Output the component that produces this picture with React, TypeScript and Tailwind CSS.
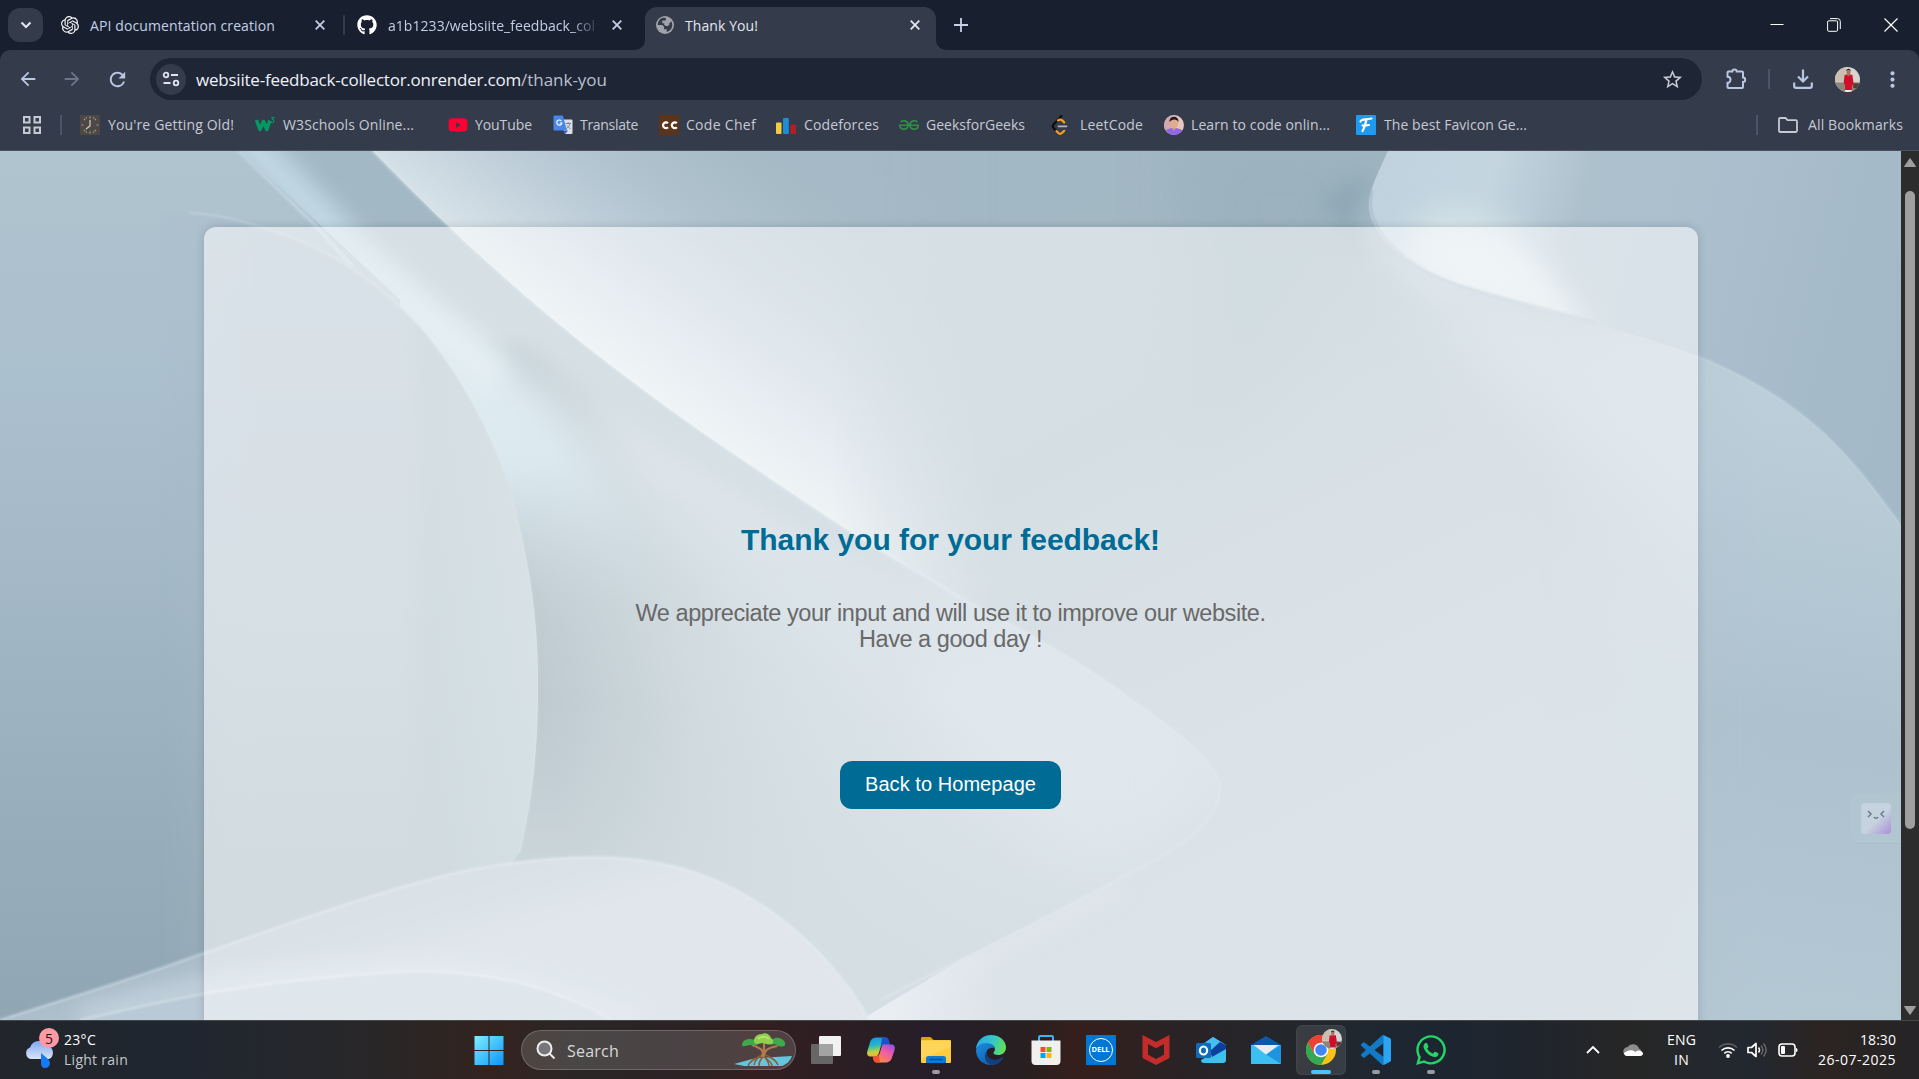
import React, { useLayoutEffect, useRef, useState } from "react";
import { FaGithub, FaYoutube, FaWhatsapp } from "react-icons/fa";
import { SiOpenai, SiGeeksforgeeks } from "react-icons/si";
import {
  MdArrowBack,
  MdArrowForward,
  MdRefresh,
  MdStarOutline,
  MdMoreVert,
} from "react-icons/md";

/* Text whose tracking is adjusted so that the line takes exactly `w` pixels. */
function Fit({ w, className = "", children }: { w: number; className?: string; children: React.ReactNode }) {
  const ref = useRef<HTMLSpanElement>(null);
  const [ls, setLs] = useState(0);
  useLayoutEffect(() => {
    const el = ref.current;
    if (!el) return;
    const n = (el.textContent || "").length;
    setLs((w - el.getBoundingClientRect().width) / n);
  }, [w]);
  return (
    <span ref={ref} className={"inline-block whitespace-pre " + className} style={{ letterSpacing: ls + "px" }}>
      {children}
    </span>
  );
}

const Cross = ({ className = "" }: { className?: string }) => (
  <svg viewBox="0 0 10 10" className={"h-2.5 w-2.5 shrink-0 " + className}>
    <path d="M0.7 0.7 9.3 9.3M9.3 0.7 0.7 9.3" stroke="currentColor" strokeWidth="1.8" />
  </svg>
);

const Globe = () => (
  <svg viewBox="0 0 18 18" className="h-[18px] w-[18px] shrink-0">
    <circle cx="9" cy="9" r="9" fill="#a0a4aa" />
    <path
      d="M7.5 1.8C4 2.4 1.7 5.3 1.8 9h3.6c1.500 0 2.600 1 2.600 2.400v1.800h2.700v2.900c3.300-.8 5.600-3.700 5.600-7 0-1.500-.4-2.900-1.200-4.100-.3 1.400-1.200 2.200-2.600 2.200h-1.800v1.800H8.900V7.200H6.300V4.500h3.500V2.100c-.8-.3-1.500-.4-2.300-.3z"
      fill="#343b4b"
    />
    <path d="M9 5.500h3.200l1.500 2.700-2 1.900H9.400L8 8.200z" fill="#a0a4aa" />
  </svg>
);

const Portrait = ({ className = "" }: { className?: string }) => (
  <svg viewBox="0 0 26 26" className={"shrink-0 rounded-full " + className}>
    <rect width="26" height="26" fill="#d7d4d2" />
    <rect width="11" height="15" fill="#c9bfae" />
    <rect y="16" width="26" height="10" fill="#8f8478" />
    <rect x="19" y="17" width="7" height="5" fill="#5a3a34" />
    <path d="M10 8h8l1.500 10-2 1.500V25h-7v-6l-1.500-3z" fill="#cf0f2c" />
    <path d="M12 4h4v4l-2 1.500L12 8z" fill="#a8745a" />
    <path d="M11.500 4.500C11.500 1 16.500 1 16.500 4.500L15 3.500h-2z" fill="#241b1b" />
    <path d="M10.500 24h7v2h-7z" fill="#eee" />
  </svg>
);

/* ---------- bookmark icons ---------- */

const IcoClock = () => (
  <svg viewBox="0 0 20 20" className="h-5 w-5">
    <rect width="20" height="20" fill="#4b4845" />
    <g stroke="#a59c8b" strokeWidth="1.200">
      <path d="M10 1.500v2M10 16.500v2M1.500 10h2M16.500 10h2M4 4l1.200 1.200M16 4l-1.200 1.200M4 16l1.200-1.200M16 16l-1.200-1.200M6 2.200l.6 1.400M14 2.200l-.6 1.400M6 17.800l.6-1.400M14 17.800l-.6-1.400" />
      <path d="M10 5v6l-4 3" stroke="#d8cfbd" fill="none" />
    </g>
  </svg>
);
const IcoW3 = () => (
  <svg viewBox="0 0 20 20" className="h-5 w-5">
    <path d="M1.500 5l3.500 9.500L8.500 6.500l3.300 8 3-9" fill="none" stroke="#059862" strokeWidth="3.600" strokeLinejoin="round" />
    <path d="M16 2.500h3l-1.500 2c2 0 2 3.200-.2 3.200-.7 0-1.200-.3-1.500-.8" fill="none" stroke="#059862" strokeWidth="1.100" />
  </svg>
);
const IcoTranslate = () => (
  <svg viewBox="0 0 20 20" className="h-5 w-5">
    <path d="M7 4.500h11.500a1 1 0 011 1V18a1 1 0 01-1 1H12z" fill="#dcdfe3" />
    <path d="M10.500 15.500l1.500 3.700 3-3.700z" fill="#2f5fc4" />
    <path d="M1.500.5h8.300L14 15.500H1.500a1 1 0 01-1-1v-13a1 1 0 011-1z" fill="#4a86ea" />
    <path d="M8.400 6A2.600 2.600 0 108.900 8H6.700" fill="none" stroke="#fff" strokeWidth="1.200" />
    <path d="M12.500 8.500h5.500M15.200 7v1.500M17 8.500c-.5 2.500-2 4-3.500 5M14 10.500l3.500 3.500" stroke="#7b8794" fill="none" />
  </svg>
);
const IcoCC = () => (
  <svg viewBox="0 0 20 20" className="h-5 w-5">
    <rect width="20" height="20" fill="#5b3419" />
    <path d="M9 8.200A2.900 2.900 0 109 12.300M17.800 8.200a2.900 2.900 0 100 4.100" fill="none" stroke="#fff" strokeWidth="2.300" />
  </svg>
);
const IcoCF = () => (
  <svg viewBox="0 0 20 20" className="h-5 w-5">
    <rect x="0" y="7.500" width="5.500" height="11.500" rx="1" fill="#f6c944" />
    <rect x="7" y="3" width="5.800" height="16" rx="1" fill="#1f8dd6" />
    <rect x="14.500" y="9.500" width="5.500" height="9.500" rx="1" fill="#b21f26" />
  </svg>
);
const IcoLeet = () => (
  <svg viewBox="0 0 20 20" className="h-5 w-5" fill="none" strokeWidth="2.200" strokeLinecap="round">
    <path d="M11.500 1 3.500 9.500c-1 1.200-1 2.300 0 3.400l3 3.200" stroke="#0d0d0d" />
    <path d="M6.500 16.100l1.500 1.700c1.300 1.200 3 1.200 4.200 0l2-2M8 5.400c1.500-1 3-1 4.200 0l2 2" stroke="#f5a11b" />
    <path d="M8.500 11.300h8" stroke="#b3b3b3" strokeWidth="1.800" />
  </svg>
);
const IcoFace = () => (
  <svg viewBox="0 0 20 20" className="h-5 w-5 rounded-full">
    <rect width="20" height="20" fill="#e6c4c0" />
    <rect width="8" height="20" fill="#cfa9ae" />
    <path d="M0 20c0-5 4-7 10-7s10 2 10 7z" fill="#8f68e8" />
    <ellipse cx="10" cy="8" rx="4.200" ry="5.600" fill="#e2ac8c" />
    <path d="M5.500 7C5 0 15 0 14.500 7 13 3.500 8 3.500 5.500 7z" fill="#201a26" />
    <path d="M8 13h4l-2 3z" fill="#d49a7c" />
  </svg>
);
const IcoFav = () => (
  <svg viewBox="0 0 20 20" className="h-5 w-5">
    <rect width="20" height="20" rx="1" fill="#1e9bf0" />
    <path d="M4.500 6.500c1-3 4-1.500 11-3M10.500 5c-1.500 4-1.500 7-4 11M6.500 10.500c2 .8 4-.5 6.500-.5" fill="none" stroke="#fff" strokeWidth="2.200" strokeLinecap="round" />
  </svg>
);

const bookmarks = [
  { icon: <IcoClock />, label: "You're Getting Old!", w: 126, cls: "w-[175px] gap-[8px]" },
  { icon: <IcoW3 />, label: "W3Schools Online...", w: 131, cls: "w-[193px] gap-[8px]" },
  { icon: <FaYoutube className="h-5 w-5 text-[#ff0033]" />, label: "YouTube", w: 57, cls: "w-[105px] gap-[7px]" },
  { icon: <IcoTranslate />, label: "Translate", w: 58, cls: "w-[106px] gap-[7px]" },
  { icon: <IcoCC />, label: "Code Chef", w: 70, cls: "w-[117px] gap-[7px]" },
  { icon: <IcoCF />, label: "Codeforces", w: 75, cls: "w-[123px] gap-[8px]" },
  { icon: <SiGeeksforgeeks className="h-5 w-5 text-[#2f8d46]" />, label: "GeeksforGeeks", w: 99, cls: "w-[151px] gap-[7px]" },
  { icon: <IcoLeet />, label: "LeetCode", w: 63, cls: "w-[114px] gap-[10px]" },
  { icon: <IcoFace />, label: "Learn to code onlin...", w: 139, cls: "w-[192px] gap-[7px]" },
  { icon: <IcoFav />, label: "The best Favicon Ge...", w: 143, cls: "w-[175px] gap-[8px]" },
];

/* ---------- browser chrome ---------- */

function TabStrip() {
  return (
    <div className="flex h-[50px] items-center bg-[#18202f] pl-2 text-[14px] text-[#c3cfe6]">
      <div className="flex h-[34px] w-[35px] items-center justify-center rounded-xl bg-[#343b4b]">
        <svg viewBox="0 0 12 8" className="h-2 w-3">
          <path d="M1.500 1.500 6 6l4.500-4.500" fill="none" stroke="#dfe4ee" strokeWidth="2.200" />
        </svg>
      </div>
      <SiOpenai className="ml-[18px] h-[18px] w-[18px] text-[#f2f4f8]" />
      <Fit w={185} className="ml-[11px] pt-px">API documentation creation</Fit>
      <Cross className="ml-10" />
      <div className="ml-[18px] h-5 w-[2px] rounded bg-[#343b4b]" />
      <FaGithub className="ml-[12px] h-5 w-5 text-white" />
      <div className="ml-[11px] w-[208px] pt-px [mask-image:linear-gradient(to_right,black_88%,rgba(0,0,0,0.15))]">
        <Fit w={207}>a1b1233/websiite_feedback_col</Fit>
      </div>
      <Cross className="ml-4" />
      <div className="ml-[13px] h-full w-[10px] self-end bg-[#343b4b]">
        <div className="h-full rounded-br-[12px] bg-[#18202f]" />
      </div>
      <div className="flex h-[43px] w-[291px] items-center self-end rounded-t-[12px] bg-[#343b4b] pb-[7px] pl-[11px] text-[#e3e7f0]">
        <Globe />
        <Fit w={73} className="ml-[11px] pt-px">Thank You!</Fit>
        <Cross className="ml-[152px]" />
      </div>
      <div className="h-full w-[10px] bg-[#343b4b]">
        <div className="h-full rounded-bl-[12px] bg-[#18202f]" />
      </div>
      <svg viewBox="0 0 14 14" className="ml-[8px] h-[14px] w-[14px]">
        <path d="M7 0v14M0 7h14" stroke="#c8d2e6" strokeWidth="1.800" />
      </svg>
      <div className="ml-auto flex items-center text-white">
        <svg viewBox="0 0 14 14" className="h-[14px] w-[14px]">
          <path d="M0.500 6.500h13" stroke="#fff" />
        </svg>
        <svg viewBox="0 0 14 14" className="ml-[43px] h-[14px] w-[14px]" fill="none" stroke="#fff">
          <rect x="0.600" y="2.800" width="10" height="10.500" rx="1.200" />
          <path d="M3 .6h7.500a2.800 2.800 0 012.800 2.800V11" />
        </svg>
        <svg viewBox="0 0 14 14" className="mr-[21px] ml-[43px] h-[14px] w-[14px]">
          <path d="M0.500 0.500l13 13M13.500 0.500l-13 13" stroke="#fff" strokeWidth="1.200" />
        </svg>
      </div>
    </div>
  );
}

function Toolbar() {
  return (
    <div className="flex h-[58px] items-center bg-[#343b4b] pl-[17px] text-[#b9c7e2]">
      <MdArrowBack className="h-[22px] w-[22px]" />
      <MdArrowForward className="ml-[22px] h-[22px] w-[22px] text-[#6d7688]" />
      <MdRefresh className="ml-[23px] h-[23px] w-[23px]" />
      <div className="ml-[21px] flex h-[42px] w-[1552px] items-center rounded-full bg-[#1e2636] pl-[6px]">
        <div className="flex h-[31px] w-[30px] items-center justify-center rounded-full bg-[#343b4b]">
          <svg viewBox="0 0 18 16" className="h-4 w-[18px]" fill="none" stroke="#dfe5f0" strokeWidth="1.800">
            <circle cx="4" cy="4" r="2.300" />
            <path d="M9 4h7M1.500 12h7" />
            <circle cx="14" cy="12" r="2.300" />
          </svg>
        </div>
        <div className="ml-[10px] flex pt-px text-[17px] text-[#eef1f7]">
          <Fit w={325}>websiite-feedback-collector.onrender.com</Fit>
          <Fit w={86} className="text-[#b9c0cf]">/thank-you</Fit>
        </div>
        <MdStarOutline className="mr-[18px] ml-auto h-[23px] w-[23px] text-[#c6cad3]" />
      </div>
      <svg viewBox="0 0 24 24" className="ml-[22px] h-6 w-6" fill="none" stroke="currentColor" strokeWidth="2">
        <path d="M4 4.500h4.300a2.200 2 0 014.400 0h5.300a1 1 0 011 1v5a2.200 2.200 0 010 4.400V20a1 1 0 01-1 1H4.500a1 1 0 01-1-1v-4.200a3 3 0 000-6V5.500a1 1 0 011-1z" />
      </svg>
      <div className="ml-[20px] h-5 w-[2px] bg-[#4b556a]" />
      <svg viewBox="0 0 20 20" className="ml-[23px] h-5 w-5" fill="none" stroke="currentColor" strokeWidth="2.200">
        <path d="M10 .5v11.500M5 7.500l5 5 5-5M1.200 13.500V17a1.800 1.800 0 001.800 1.800h14a1.800 1.800 0 001.800-1.800v-3.500" />
      </svg>
      <Portrait className="ml-[22px] h-[25px] w-[25px]" />
      <MdMoreVert className="ml-[20px] h-[25px] w-[25px]" />
    </div>
  );
}

function BookmarkBar() {
  return (
    <div className="flex h-[43px] items-center border-b border-[#4b525f] bg-[#343b4b] pb-[9px] pl-[23px] text-[14px] text-[#c6cad3]">
      <svg viewBox="0 0 18 18" className="h-[18px] w-[18px]" fill="none" stroke="currentColor" strokeWidth="2">
        <path d="M1 1h5.500v5.500H1zM11.500 1H17v5.500h-5.500zM1 11.500h5.500V17H1zM11.500 11.500H17V17h-5.500z" />
      </svg>
      <div className="mr-[18px] ml-[19px] h-5 w-[2px] bg-[#4b556a]" />
      {bookmarks.map((b) => (
        <div key={b.label} className={"flex shrink-0 items-center " + b.cls}>
          {b.icon}
          <Fit w={b.w}>{b.label}</Fit>
        </div>
      ))}
      <div className="mr-[16px] ml-auto flex items-center">
        <div className="h-5 w-[2px] bg-[#4b556a]" />
        <svg viewBox="0 0 20 16" className="ml-[20px] h-4 w-5" fill="none" stroke="currentColor" strokeWidth="1.800">
          <path d="M1 2.200C1 1.500 1.500 1 2.200 1h5.300l2 2.200h8.300c.7 0 1.200.5 1.200 1.200v9.400c0 .7-.5 1.200-1.200 1.200H2.200C1.500 15 1 14.500 1 13.800z" />
        </svg>
        <Fit w={95} className="ml-[10px]">All Bookmarks</Fit>
      </div>
    </div>
  );
}

/* ---------- page ---------- */

function Waves() {
  return (
    <svg
      viewBox="0 151 1901 869"
      preserveAspectRatio="none"
      colorInterpolationFilters="sRGB"
      className="absolute inset-0 h-full w-full"
    >
      <defs>
        <linearGradient id="left" x1="0" y1="151" x2="0" y2="1020" gradientUnits="userSpaceOnUse">
          <stop offset="0" stopColor="#afc4ce" />
          <stop offset=".25" stopColor="#abc0cd" />
          <stop offset=".4" stopColor="#a7bbcb" />
          <stop offset=".7" stopColor="#9ab0bf" />
          <stop offset="1" stopColor="#90a6b3" />
        </linearGradient>
        <linearGradient id="arc" x1="0" y1="210" x2="0" y2="870" gradientUnits="userSpaceOnUse">
          <stop offset="0" stopColor="#acbecd" />
          <stop offset=".4" stopColor="#a8bac8" />
          <stop offset=".6" stopColor="#a5bac4" />
          <stop offset="1" stopColor="#9cb1bb" />
        </linearGradient>
        <linearGradient id="arcFade" x1="0" y1="0" x2="420" y2="0" gradientUnits="userSpaceOnUse">
          <stop offset=".38" stopColor="#fff" stopOpacity="0" />
          <stop offset=".6" stopColor="#fff" stopOpacity="1" />
        </linearGradient>
        <mask id="arcMask"><rect y="151" width="1901" height="869" fill="url(#arcFade)" /></mask>
        <linearGradient id="arcTone" x1="400" y1="0" x2="540" y2="0" gradientUnits="userSpaceOnUse">
          <stop offset="0" stopColor="#97b0b8" stopOpacity="0" />
          <stop offset=".22" stopColor="#97b0b8" stopOpacity=".55" />
          <stop offset="1" stopColor="#a5bfca" stopOpacity=".6" />
        </linearGradient>
        <linearGradient id="sheet" x1="353" y1="176" x2="556" y2="-93" gradientUnits="userSpaceOnUse">
          <stop offset="0" stopColor="#dde8ec" />
          <stop offset=".1" stopColor="#d3dfe6" />
          <stop offset=".3" stopColor="#c0cfda" />
          <stop offset=".5" stopColor="#b0c3cf" />
          <stop offset=".75" stopColor="#a6bbc6" />
          <stop offset="1" stopColor="#a4b9c5" />
        </linearGradient>
        <linearGradient id="sheetFade" x1="830" y1="0" x2="1000" y2="0" gradientUnits="userSpaceOnUse">
          <stop offset="0" stopColor="#fff" />
          <stop offset="1" stopColor="#fff" stopOpacity="0" />
        </linearGradient>
        <mask id="sheetMask"><rect y="151" width="1901" height="869" fill="url(#sheetFade)" /></mask>
        <linearGradient id="sheetBase" x1="900" y1="200" x2="1250" y2="900" gradientUnits="userSpaceOnUse">
          <stop offset="0" stopColor="#a2b8c4" />
          <stop offset=".4" stopColor="#a2b8c1" />
          <stop offset=".7" stopColor="#acbdc9" />
          <stop offset="1" stopColor="#b2c2cf" />
        </linearGradient>
        <linearGradient id="under" x1="530" y1="680" x2="1010" y2="560" gradientUnits="userSpaceOnUse">
          <stop offset="0" stopColor="#6d8795" />
          <stop offset=".12" stopColor="#7e97a4" />
          <stop offset=".32" stopColor="#98afba" />
          <stop offset=".55" stopColor="#a8bdc8" />
          <stop offset=".8" stopColor="#b7c8d4" />
          <stop offset="1" stopColor="#bccbd7" />
        </linearGradient>
        <linearGradient id="underLow" x1="0" y1="700" x2="0" y2="950" gradientUnits="userSpaceOnUse">
          <stop offset="0" stopColor="#9bb2bd" stopOpacity="0" />
          <stop offset="1" stopColor="#a1b7c0" stopOpacity=".9" />
        </linearGradient>
        <linearGradient id="glow" x1="0" y1="360" x2="0" y2="620" gradientUnits="userSpaceOnUse">
          <stop offset="0" stopColor="#b9d4e1" />
          <stop offset=".4" stopColor="#b2cfdd" />
          <stop offset="1" stopColor="#8faab9" stopOpacity="0" />
        </linearGradient>
        <linearGradient id="wave" x1="200" y1="850" x2="250" y2="1020" gradientUnits="userSpaceOnUse">
          <stop offset="0" stopColor="#b0c1cd" />
          <stop offset=".6" stopColor="#acbdca" />
          <stop offset="1" stopColor="#b9c8d5" />
        </linearGradient>
        <linearGradient id="rightTop" x1="1370" y1="200" x2="1901" y2="330" gradientUnits="userSpaceOnUse">
          <stop offset="0" stopColor="#bfd2de" />
          <stop offset=".2" stopColor="#c5d6e0" />
          <stop offset=".38" stopColor="#adc1cd" />
          <stop offset=".7" stopColor="#a9bdcc" />
          <stop offset="1" stopColor="#a3b9c7" />
        </linearGradient>
        <linearGradient id="rightLow" x1="1800" y1="350" x2="1700" y2="1020" gradientUnits="userSpaceOnUse">
          <stop offset="0" stopColor="#bdd0db" />
          <stop offset=".3" stopColor="#b5c9d5" />
          <stop offset=".55" stopColor="#adc2ce" />
          <stop offset="1" stopColor="#b3c8d3" />
        </linearGradient>
        <linearGradient id="rightFade" x1="1540" y1="0" x2="1760" y2="0" gradientUnits="userSpaceOnUse">
          <stop offset="0" stopColor="#fff" stopOpacity="0" />
          <stop offset="1" stopColor="#fff" />
        </linearGradient>
        <mask id="rightMask"><rect y="151" width="1901" height="869" fill="url(#rightFade)" /></mask>
        <filter id="b2" x="-20%" y="-20%" width="140%" height="140%"><feGaussianBlur stdDeviation="1" /></filter>
        <filter id="b12" x="-40%" y="-60%" width="180%" height="220%"><feGaussianBlur stdDeviation="11" /></filter>
        <filter id="b20" x="-50%" y="-60%" width="200%" height="220%"><feGaussianBlur stdDeviation="18" /></filter>
        <filter id="b35" x="-50%" y="-50%" width="200%" height="200%"><feGaussianBlur stdDeviation="32" /></filter>
        <clipPath id="cSheet">
          <path d="M372 151C480 262 580 350 735 455S880 550 960 597C1010 623 1080 660 1131 699L1220 785L1143 866L960 960L860 1020H1901V151Z" />
        </clipPath>
        <clipPath id="cUnder">
          <path d="M240 151H372C480 262 580 350 735 455S880 550 960 597C1010 623 1080 660 1131 699C1180 733 1220 765 1220 787C1220 822 1180 847 1143 866C1080 900 1010 935 960 960L860 1020H400V300Z" />
        </clipPath>
        <clipPath id="cBlob">
          <path d="M1388 151C1370 190 1362 205 1376 228C1400 270 1461 286 1529 306C1620 330 1670 345 1698 356C1810 402 1850 455 1901 525V151Z" />
        </clipPath>
        <clipPath id="cWave">
          <path d="M0 1020C80 994 130 980 204 953C306 918 400 884 470 870C620 842 690 865 740 892C800 925 845 975 869 1020Z" />
        </clipPath>
      </defs>

      <rect y="151" width="1901" height="869" fill="url(#left)" />

      {/* large sheet right of the diagonal */}
      <g clipPath="url(#cSheet)">
        <rect y="151" width="1901" height="869" fill="url(#sheetBase)" />
        <rect y="151" width="1901" height="869" fill="url(#sheet)" mask="url(#sheetMask)" />
        <path d="M1180 120H1390L1370 240L1200 480Z" fill="#93abb8" opacity=".4" filter="url(#b35)" />
        <path d="M1320 200L1368 175V245Z" fill="#7f9caa" opacity=".55" filter="url(#b12)" />
        <path d="M1376 228C1400 270 1461 286 1529 306L1698 356L1760 420L1720 560L1500 400Z" fill="#b7c9d5" filter="url(#b35)" />
        <path d="M1376 228L1529 306L1698 356L1700 420L1500 350Z" fill="#b9cad6" opacity=".6" filter="url(#b20)" />
        <path d="M1376 228C1400 270 1461 286 1529 306C1620 330 1670 345 1698 356C1810 402 1850 455 1901 525V1020H1400V300Z" fill="url(#rightLow)" mask="url(#rightMask)" />
        <path d="M1120 885L960 970L860 1010" fill="none" stroke="#c3d1dc" strokeWidth="16" opacity=".6" filter="url(#b12)" />
      </g>

      {/* folded surface under the diagonal */}
      <g clipPath="url(#cUnder)">
        <rect y="151" width="1901" height="869" fill="url(#under)" />
        <path d="M240 130H400L560 330L440 360L380 290Z" fill="#a4b9c6" filter="url(#b12)" />
        <path d="M560 360L960 600L1060 690L820 650L600 470Z" fill="#b1c4d0" opacity=".9" filter="url(#b35)" />
        <rect y="600" width="1901" height="420" fill="url(#underLow)" />
        <path d="M930 620L1131 690L1220 785L1143 866L1060 870L940 720Z" fill="#bdcfdb" opacity=".6" filter="url(#b35)" />
        <path d="M360 250L540 390L720 630L560 650L460 470Z" fill="url(#glow)" filter="url(#b20)" />
        <path d="M600 400L960 610L1010 650L820 570L650 480Z" fill="#b4c5d1" opacity=".8" filter="url(#b12)" />
        <path d="M270 120L350 210L440 285L620 415L820 540L960 600L735 455L372 120Z" fill="#a2b8c4" filter="url(#b12)" />
        <path d="M225 120L340 240L420 315L500 380" fill="none" stroke="#c3dae5" strokeWidth="38" filter="url(#b12)" />
      </g>

      {/* left arc */}
      <path d="M171 212C200 213 235 218 263 228C320 243 370 275 416 322C455 365 490 430 508 483C530 560 538 620 538 683C538 760 530 810 520 852L500 880L100 1020V212Z" fill="url(#arc)" mask="url(#arcMask)" />
      <path d="M390 296C455 365 490 430 508 483C530 560 538 620 538 683C538 760 530 810 520 852L500 880H390Z" fill="url(#arcTone)" />
      <path d="M190 213C215 214 240 220 263 228C320 243 370 275 416 322" fill="none" stroke="#c7d9e2" strokeWidth="2" opacity=".6" filter="url(#b2)" />
      <path d="M416 322C455 365 490 430 508 483C530 560 538 620 538 683C538 760 530 810 520 852" fill="none" stroke="#c0d3dd" strokeWidth="1.500" opacity=".3" filter="url(#b2)" />
      <path d="M239 151L312 222L352 266" fill="none" stroke="#c8dce7" strokeWidth="4" opacity=".6" filter="url(#b2)" />

      {/* diagonal edge highlights */}
      <path d="M372 151C480 262 580 350 735 455S880 550 960 597" fill="none" stroke="#dde8ed" strokeWidth="2" opacity=".5" filter="url(#b2)" />
      <path d="M960 597C1010 623 1080 660 1131 699C1180 733 1220 765 1220 787C1220 822 1180 847 1143 866C1080 900 1010 935 960 960L880 1000" fill="none" stroke="#c6d5df" strokeWidth="2" opacity=".45" filter="url(#b2)" />

      {/* upper right fold */}
      <g clipPath="url(#cBlob)">
        <rect y="151" width="1901" height="869" fill="url(#rightTop)" />
        <path d="M1390 260L1440 210L1510 230L1600 345L1461 300Z" fill="#dbe7eb" filter="url(#b20)" />
        <path d="M1420 262L1470 240L1530 265L1590 335L1461 292Z" fill="#dbe7eb" opacity=".6" filter="url(#b12)" />
      </g>
      <path d="M1372 190C1362 225 1400 266 1461 286C1520 304 1560 312 1596 323" fill="none" stroke="#a4b8c2" strokeWidth="3" opacity=".8" filter="url(#b2)" />
      <path d="M1364 200C1362 232 1396 274 1458 295" fill="none" stroke="#cfdee7" strokeWidth="10" opacity=".5" filter="url(#b12)" />
      <path d="M1698 356C1810 402 1850 455 1901 525" fill="none" stroke="#c6d8e2" strokeWidth="1.500" opacity=".6" filter="url(#b2)" />

      {/* lower wave */}
      <g clipPath="url(#cWave)">
        <rect y="840" width="900" height="180" fill="url(#wave)" />
        <path d="M80 1020C150 1000 240 975 416 971C500 972 560 990 640 1020" fill="none" stroke="#c6d5df" strokeWidth="20" filter="url(#b12)" />
        <path d="M80 1020C150 1005 240 980 416 971C500 972 560 990 612 1020Z" fill="#b9c9d5" />
        <path d="M80 1020C150 1005 240 980 416 971C500 972 560 990 612 1020" fill="none" stroke="#d5e1e9" strokeWidth="2.500" opacity=".7" filter="url(#b2)" />
      </g>
      <path d="M0 1020C80 994 130 980 204 953C306 918 400 884 470 870C620 842 690 865 740 892C800 925 845 975 869 1020" fill="none" stroke="#c6d7e1" strokeWidth="2.500" opacity=".7" filter="url(#b2)" />
    </svg>
  );
}

function ScrollBar() {
  return (
    <div className="flex h-full w-[18px] shrink-0 flex-col items-center bg-[#2c2c2c]">
      <svg viewBox="0 0 12 9" className="mt-[7px] h-[9px] w-3">
        <path d="M6 .5 11.500 8.500H.5z" fill="#9f9f9f" stroke="#9f9f9f" strokeLinejoin="round" />
      </svg>
      <div className="mt-[24px] h-[638px] w-[10px] rounded-full bg-[#9f9f9f]" />
      <svg viewBox="0 0 12 9" className="mt-auto mb-[5px] h-[9px] w-3">
        <path d="M6 8.500 11.500.5H.5z" fill="#9f9f9f" stroke="#9f9f9f" strokeLinejoin="round" />
      </svg>
    </div>
  );
}

function Page() {
  return (
    <div className="flex h-[869px]">
      <div className="relative h-full flex-1 overflow-hidden">
        <Waves />
        <div className="relative mx-auto mt-[76px] flex h-[900px] w-[1494px] flex-col items-center rounded-xl bg-white/55 pt-[293px] font-['Liberation_Sans',Arial,sans-serif] shadow-[0_0_10px_rgba(0,0,0,0.15)]">
          <h1 className="text-[30px] leading-[40px] font-bold text-[#006b94]">
            <Fit w={419}>Thank you for your feedback!</Fit>
          </h1>
          <p className="mt-[40px] flex flex-col items-center text-[23.5px] leading-[26px] text-[#696969]">
            <Fit w={630}>We appreciate your input and will use it to improve our website.</Fit>
            <Fit w={183}>Have a good day !</Fit>
          </p>
          <button className="mt-[109px] flex h-12 w-[221px] items-center justify-center rounded-xl bg-[#006b94] pb-[2px] text-[20px] text-white">
            <Fit w={171}>Back to Homepage</Fit>
          </button>
        </div>
        <div className="absolute right-0 top-[642px] flex h-[51px] w-[50px] items-center rounded-l-lg border-b border-[#a9bdc9] bg-[#b3c7d3]/50 pl-[10px]">
          <div className="flex h-[31px] w-[30px] justify-center rounded bg-[linear-gradient(135deg,#c5d3de_55%,#a98fd6)] pt-[7px]">
            <svg viewBox="0 0 18 10" className="h-[10px] w-[18px]" fill="none" stroke="#6f7f90" strokeWidth="1.600">
              <path d="M1 1l3 3-3 3M17 1l-3 3 3 3M7 7c.5 1.500 3.500 1.500 4 0" />
            </svg>
          </div>
        </div>
      </div>
      <ScrollBar />
    </div>
  );
}

/* ---------- taskbar ---------- */

const WinLogo = () => (
  <svg viewBox="0 0 30 30" className="h-[30px] w-[30px]">
    <defs>
      <linearGradient id="win" x1="0" y1="0" x2="1" y2="1">
        <stop offset="0" stopColor="#7df0ff" />
        <stop offset="1" stopColor="#0c94fb" />
      </linearGradient>
    </defs>
    <path d="M.5 1h14v14H.5zM15.500 1h14v14h-14zM.5 16h14v14H.5zM15.500 16h14v14h-14z" fill="url(#win)" />
  </svg>
);

const Tree = () => (
  <svg viewBox="0 0 58 34" className="h-[34px] w-[58px]">
    <path d="M0 31l22-6 36-2c-2 5-5 8-10 10H10z" fill="#63c6dd" />
    <path d="M20 32c1-6 5-8 9-10 1 3 9 6 9 11M25 33c0-5 2-7 5-10 2 3 5 6 5 10M14 33c2-6 9-8 14-11M44 32c-2-6-9-8-14-11" fill="none" stroke="#8a5a33" strokeWidth="1.500" />
    <path d="M28 24c2-6 1-8-10-12M29.500 24c1-7 4-9 14-11M30 22V8" fill="none" stroke="#b17b4c" strokeWidth="2.200" />
    <path d="M8 12c0-4 4-6 8-6 5 0 8 3 8 5s-5 1-8 1-8 3-8 0zM36 11c1-5 5-7 9-6 5 1 7 5 6 7s-6 2-8 0-8 1-7-1z" fill="#3fa84c" />
    <path d="M20 8c0-4 3-7 8-7 4-2 8 1 9 4 3 2 3 6 0 6-3 1-5 0-8-1-4 1-9 2-9-2z" fill="#8fd14f" />
    <path d="M24 6c3-3 8-3 11 0" stroke="#b9e86d" strokeWidth="1.500" fill="none" />
  </svg>
);

const TaskView = () => (
  <svg viewBox="0 0 30 30" className="h-[30px] w-[30px]">
    <rect x="8" y="1" width="22" height="20" rx="1" fill="#f1f1f1" />
    <rect x="0" y="9" width="22" height="20" rx="1" fill="#666" />
    <path d="M8 9h14v12H8z" fill="#a3a3a3" />
  </svg>
);
const Copilot = () => (
  <svg viewBox="0 0 30 30" className="h-[30px] w-[30px]">
    <defs>
      <linearGradient id="cp1" x1="0" y1="0" x2=".2" y2="1">
        <stop offset="0" stopColor="#1f8df0" />
        <stop offset=".45" stopColor="#22b8c4" />
        <stop offset=".8" stopColor="#c4d23c" />
        <stop offset="1" stopColor="#f5b32e" />
      </linearGradient>
      <linearGradient id="cp2" x1="1" y1="0" x2=".3" y2="1">
        <stop offset="0" stopColor="#8a4fe8" />
        <stop offset=".45" stopColor="#ee5aa9" />
        <stop offset="1" stopColor="#ff8a45" />
      </linearGradient>
    </defs>
    <path d="M11 2.500h8c2 0 3 1 3.500 3l1 4H18c-2 0-3 .8-3.500 3l-1.800 6c-.6 2-1.600 3-3.700 3H4.500C1.500 21.500.6 19 1.400 16L4 7.500C5 4 7 2.500 11 2.500z" fill="url(#cp1)" />
    <path d="M16 2.500h3.500c2 0 3 1 3.500 3l1 4H18c-1.800 0-2.800.6-3.300 2z" fill="#1d4fd1" />
    <path d="M19 27.500h-8c-2 0-3-1-3.500-3l-.8-3H10c2 0 3-1 3.600-3l2-6.500c.5-2 1.500-2.500 3.400-2.500h6.500c3 0 3.900 2.500 3.100 5.500L26 22.500c-1 3.500-3 5-7 5z" fill="url(#cp2)" />
    <path d="M14 27.500h-3c-2 0-3-1-3.500-3l-.8-3H10c2 0 2.600-.4 3-1.500z" fill="#f2552c" />
  </svg>
);
const Explorer = () => (
  <svg viewBox="0 0 30 30" className="h-[30px] w-[30px]">
    <path d="M0 3.500C0 2.500.7 2 1.500 2h8l3 3v6H0z" fill="#e0a107" />
    <rect x="0" y="5" width="30" height="23" rx="1" fill="#fdcb3c" />
    <path d="M0 6h30v6L0 24z" fill="#ffdc6a" opacity=".6" />
    <path d="M5 28v-4.500c0-1.700 1-2.500 2.500-2.500h15c1.500 0 2.500.8 2.500 2.500V28z" fill="#0e7bd3" />
    <path d="M8.500 24.500h13" stroke="#0a4a8c" strokeWidth="1.400" />
  </svg>
);
const Edge = () => (
  <svg viewBox="0 0 30 30" className="h-[30px] w-[30px]">
    <defs>
      <linearGradient id="ed1" x1="0" y1=".3" x2="1" y2=".5">
        <stop offset="0" stopColor="#2aa9e6" />
        <stop offset=".55" stopColor="#35c6c9" />
        <stop offset="1" stopColor="#66e04e" />
      </linearGradient>
      <linearGradient id="ed2" x1="0" y1="0" x2="1" y2="1">
        <stop offset="0" stopColor="#1b8de0" />
        <stop offset="1" stopColor="#0c4f9e" />
      </linearGradient>
    </defs>
    <path d="M0 14C.5 6 7 0 15 0c9 0 15 6 15 12.500 0 5-4 7.500-8 7.500-3 0-5-1-4.500-2.500.5-1 1.500-1.500 1.500-3.500 0-3-3.500-5-7-5C6 9 1 12 0 14z" fill="url(#ed1)" />
    <path d="M0 15c1-4 5-7 10-7 5 0 9 3 9 6-1-2-6-2-8 1.500-2 5 2 9.500 8 9.500 3 0 5.500-1 7.500-2.500.5 0 .8.300.5.800C24.500 27.500 20 30 15 30 6.500 30 0 23.500 0 15z" fill="url(#ed2)" />
    <path d="M11 15.500c-2 5 2 9.500 8 9.500 3 0 5.500-1 7.500-2.500.5 0 .8.300.5.800C24.500 27.500 20 30 15.500 30 9 28 7 20 11 15.500z" fill="#123f82" />
  </svg>
);
const Store = () => (
  <svg viewBox="0 0 30 30" className="h-[30px] w-[30px]">
    <path d="M8 6V2.200C8 1.500 8.500 1 9.200 1h11.600c.7 0 1.200.5 1.200 1.200V6" fill="none" stroke="#38b6f1" strokeWidth="2" />
    <path d="M.5 5.500h29V26c0 2.500-1.500 4-4 4h-21c-2.500 0-4-1.500-4-4z" fill="#f0f0f0" />
    <path d="M9.500 12h5v5h-5z" fill="#f25022" />
    <path d="M15.500 12h5v5h-5z" fill="#7fba00" />
    <path d="M9.500 18h5v5h-5z" fill="#00a4ef" />
    <path d="M15.500 18h5v5h-5z" fill="#ffb900" />
  </svg>
);
const Dell = () => (
  <div className="flex h-[30px] w-[30px] items-center justify-center bg-[#0077d4]">
    <div className="flex h-6 w-6 items-center justify-center rounded-full border-[1.5px] border-white text-[7.5px] font-bold text-white">
      DELL
    </div>
  </div>
);
const McAfee = () => (
  <svg viewBox="0 0 28 30" className="h-[30px] w-7">
    <path d="M0.500 0 14 7 27.500 0V23L14 30 .5 23zM6 9v10.800l8 4.200 8-4.200V9l-8 4.200z" fill="#c42b2b" fillRule="evenodd" />
  </svg>
);
const Outlook = () => (
  <svg viewBox="0 0 30 30" className="h-[30px] w-[30px]">
    <path d="M5 10 17 2l13 8v6L5 20z" fill="#1c9be0" />
    <path d="M10 7 17 2l13 8-12 8z" fill="#48bdf0" />
    <path d="M14 20 30 11v14c0 2-1 3-3 3H8c-2 0-3-1-3-3z" fill="#3ec1ea" />
    <path d="M30 10v4L16 22l-2-6L24 7z" fill="#0a3f9e" />
    <rect x="0" y="8" width="15" height="15" rx="1.500" fill="#0f6cbd" />
    <ellipse cx="7.500" cy="15.500" rx="3.600" ry="4" fill="none" stroke="#fff" strokeWidth="2.200" />
  </svg>
);
const Mail = () => (
  <svg viewBox="0 0 30 30" className="h-[30px] w-[30px]">
    <path d="M0 10 15 1l15 9v4H0z" fill="#0f57a8" />
    <path d="M0 10h30v19H0z" fill="#3cc0f2" />
    <path d="M30 10v19L15 19.500z" fill="#1e94e0" />
    <path d="M2.500 10h25L15 19.500z" fill="#ececec" />
  </svg>
);
const Chrome = () => (
  <div className="relative">
    <svg viewBox="0 0 30 30" className="h-[30px] w-[30px]">
      <circle cx="15" cy="15" r="15" fill="#fbc116" />
      <path d="M2 7.500A15 15 0 0015 30l6.500-11.200L8.500 18.700z" fill="#34a853" />
      <path d="M2 7.500 8.500 18.700 12 15 15 7.500h13A15 15 0 002 7.500z" fill="#ea4335" />
      <circle cx="15" cy="15" r="7.300" fill="#fff" />
      <circle cx="15" cy="15" r="5.800" fill="#4285f4" />
    </svg>
    <Portrait className="absolute -top-[6px] left-[16px] h-5 w-5" />
  </div>
);
const Code = () => (
  <svg viewBox="0 0 24 24" className="h-[30px] w-[30px]">
    <path
      d="M23.150 2.587L18.210.21a1.494 1.494 0 0 0-1.705.29l-9.460 8.630-4.120-3.128a.999.999 0 0 0-1.276.057L.327 7.261A1 1 0 0 0 .326 8.740L3.899 12 .326 15.260a1 1 0 0 0 .001 1.479L1.650 17.940a.999.999 0 0 0 1.276.057l4.120-3.128 9.460 8.630a1.492 1.492 0 0 0 1.704.29l4.942-2.377A1.500 1.500 0 0 0 24 20.060V3.939a1.500 1.500 0 0 0-.85-1.352zm-5.146 14.861L10.826 12l7.178-5.448v10.896z"
      fill="#1279c4"
    />
    <path d="M18 .1 23.150 2.587A1.500 1.500 0 0124 3.940v16.100a1.500 1.500 0 01-.85 1.370L18 23.900z" fill="#2ba4f4" />
  </svg>
);

const apps = [
  { id: "view", icon: <TaskView />, dot: false },
  { id: "copilot", icon: <Copilot />, dot: false },
  { id: "files", icon: <Explorer />, dot: true },
  { id: "edge", icon: <Edge />, dot: false },
  { id: "store", icon: <Store />, dot: false },
  { id: "dell", icon: <Dell />, dot: false },
  { id: "mcafee", icon: <McAfee />, dot: false },
  { id: "outlook", icon: <Outlook />, dot: false },
  { id: "mail", icon: <Mail />, dot: false },
  { id: "chrome", icon: <Chrome />, dot: false },
  { id: "code", icon: <Code />, dot: true },
  { id: "whatsapp", icon: <FaWhatsapp className="h-[34px] w-[34px] text-[#25d366]" />, dot: true },
];

function Taskbar() {
  return (
    <div className="flex h-[59px] items-center border-t border-[#474747] bg-[linear-gradient(90deg,#22262b_0,#1f2630_9%,#26272b_17%,#2c2524_22%,#33231f_26%,#2a2626_30%,#2b2224_36%,#331f20_39%,#251e28_49%,#271f22_53%,#351f1c_56%,#2a2224_61%,#25262a_66%,#1e2731_72%,#1d2630_76%,#20252d_80%,#262626_85%,#222830_91%,#2b2422_95%,#252426_100%)] text-[15px] text-white">
      <div className="flex w-[474px] items-center pl-[25px]">
        <div className="relative h-10 w-8">
          <svg viewBox="0 0 32 40" className="h-10 w-8">
            <defs>
              <linearGradient id="cloud" x1="0" y1="0" x2="0" y2="1">
                <stop offset="0" stopColor="#7fa8ee" />
                <stop offset="1" stopColor="#d9e4f8" />
              </linearGradient>
            </defs>
            <path d="M6 29a6 6 0 01-1-11.500A10 10 0 0123 16a7 7 0 011 13z" fill="url(#cloud)" />
            <path d="M16 23l7 6c4 4 1 9-2.500 9S16 36 16 32z" fill="#1679f5" />
          </svg>
          <div className="absolute -top-[2px] left-[14px] flex h-5 w-5 items-center justify-center rounded-full bg-[#ff99a4] text-[14px] text-[#20181a]">
            5
          </div>
        </div>
        <div className="ml-[7px] flex flex-col items-start text-[14px] leading-5">
          <Fit w={32}>23°C</Fit>
          <Fit w={64} className="text-[#c7c7c9]">Light rain</Fit>
        </div>
      </div>
      <WinLogo />
      <div className="ml-[17px] flex h-10 w-[275px] items-center rounded-full border border-white/20 bg-white/15 pl-[14px]">
        <svg viewBox="0 0 20 20" className="h-5 w-5" fill="none" stroke="#eee" strokeWidth="2">
          <circle cx="8.500" cy="8.500" r="7" fill="#77767a" />
          <path d="M13.500 13.500l5 5" />
        </svg>
        <Fit w={52} className="ml-[11px] pt-px text-[16px] text-[#d9d9d9]">Search</Fit>
        <div className="mr-[3px] ml-auto">
          <Tree />
        </div>
      </div>
      <div className="ml-[2px] flex h-full">
        {apps.map((a) => (
          <div key={a.id} className="relative flex h-full w-[55px] items-center justify-center">
            <div
              className={
                a.id === "chrome"
                  ? "flex h-[50px] w-[50px] items-center justify-center rounded-md border border-white/5 bg-white/10"
                  : "flex items-center justify-center"
              }
            >
              {a.icon}
            </div>
            {a.dot && <div className="absolute bottom-[5px] h-1 w-2 rounded-full bg-[#9b9b9e]" />}
            {a.id === "chrome" && <div className="absolute bottom-[5px] h-1 w-5 rounded-full bg-[#4cc2ff]" />}
          </div>
        ))}
      </div>
      <div className="mr-[23px] ml-auto flex items-center">
        <svg viewBox="0 0 14 8" className="h-2 w-[14px]">
          <path d="M1 7l6-6 6 6" fill="none" stroke="#fff" strokeWidth="1.800" />
        </svg>
        <svg viewBox="0 0 20 14" className="ml-[23px] h-[14px] w-5">
          <path d="M5 13a4.500 4.500 0 01-.5-9A6.500 6.500 0 0116 5.500 4 4 0 0116 13z" fill="#8d8d8d" />
          <path d="M4 13c-2 0-3-1.500-3-3 3-3 9-4 11-1l3-1.500c3 0 5 1.500 5 3 0 1.700-1.500 2.500-3 2.500z" fill="#fff" />
        </svg>
        <div className="ml-[24px] flex w-[29px] flex-col items-center text-[14px] leading-5">
          <Fit w={29}>ENG</Fit>
          <Fit w={15}>IN</Fit>
        </div>
        <svg viewBox="0 0 20 16" className="ml-[22px] h-4 w-5" fill="none" strokeWidth="1.700">
          <path d="M1 5.500a13 13 0 0118 0" stroke="#5c5c5c" />
          <path d="M3.500 8.500a9.500 9.500 0 0113 0M6.300 11.300a5.500 5.500 0 017.400 0" stroke="#fff" />
          <circle cx="10" cy="14" r="1.900" fill="#fff" />
        </svg>
        <svg viewBox="0 0 20 18" className="ml-[9px] h-[18px] w-5" fill="none" strokeWidth="1.400">
          <path d="M1 6.500h3.500L9 2.500v13l-4.500-4H1z" stroke="#fff" strokeWidth="1.700" strokeLinejoin="round" />
          <path d="M11.500 6.500c1.300 1.500 1.300 3.500 0 5" stroke="#fff" />
          <path d="M14 4.500c2.300 2.700 2.300 6.300 0 9M16.500 2.500c3.300 4 3.300 9 0 13" stroke="#6a6a6a" />
        </svg>
        <svg viewBox="0 0 20 14" className="ml-[11px] h-[14px] w-5" fill="none">
          <rect x="1" y="1" width="16" height="12" rx="3" stroke="#fff" strokeWidth="1.600" />
          <rect x="3" y="3" width="4" height="8" rx="1" fill="#fff" />
          <path d="M18 5c2 0 2 4 0 4z" fill="#fff" />
        </svg>
        <div className="ml-[20px] flex w-[78px] flex-col items-end text-[14px] leading-5">
          <Fit w={36}>18:30</Fit>
          <Fit w={78}>26-07-2025</Fit>
        </div>
      </div>
    </div>
  );
}

export default function App() {
  return (
    <div className="flex h-[1079px] w-[1919px] flex-col overflow-hidden bg-[#18202f] font-['Open_Sans','Noto_Sans',sans-serif]">
      <TabStrip />
      <div className="overflow-hidden rounded-t-[10px]">
        <Toolbar />
        <BookmarkBar />
      </div>
      <Page />
      <Taskbar />
    </div>
  );
}
